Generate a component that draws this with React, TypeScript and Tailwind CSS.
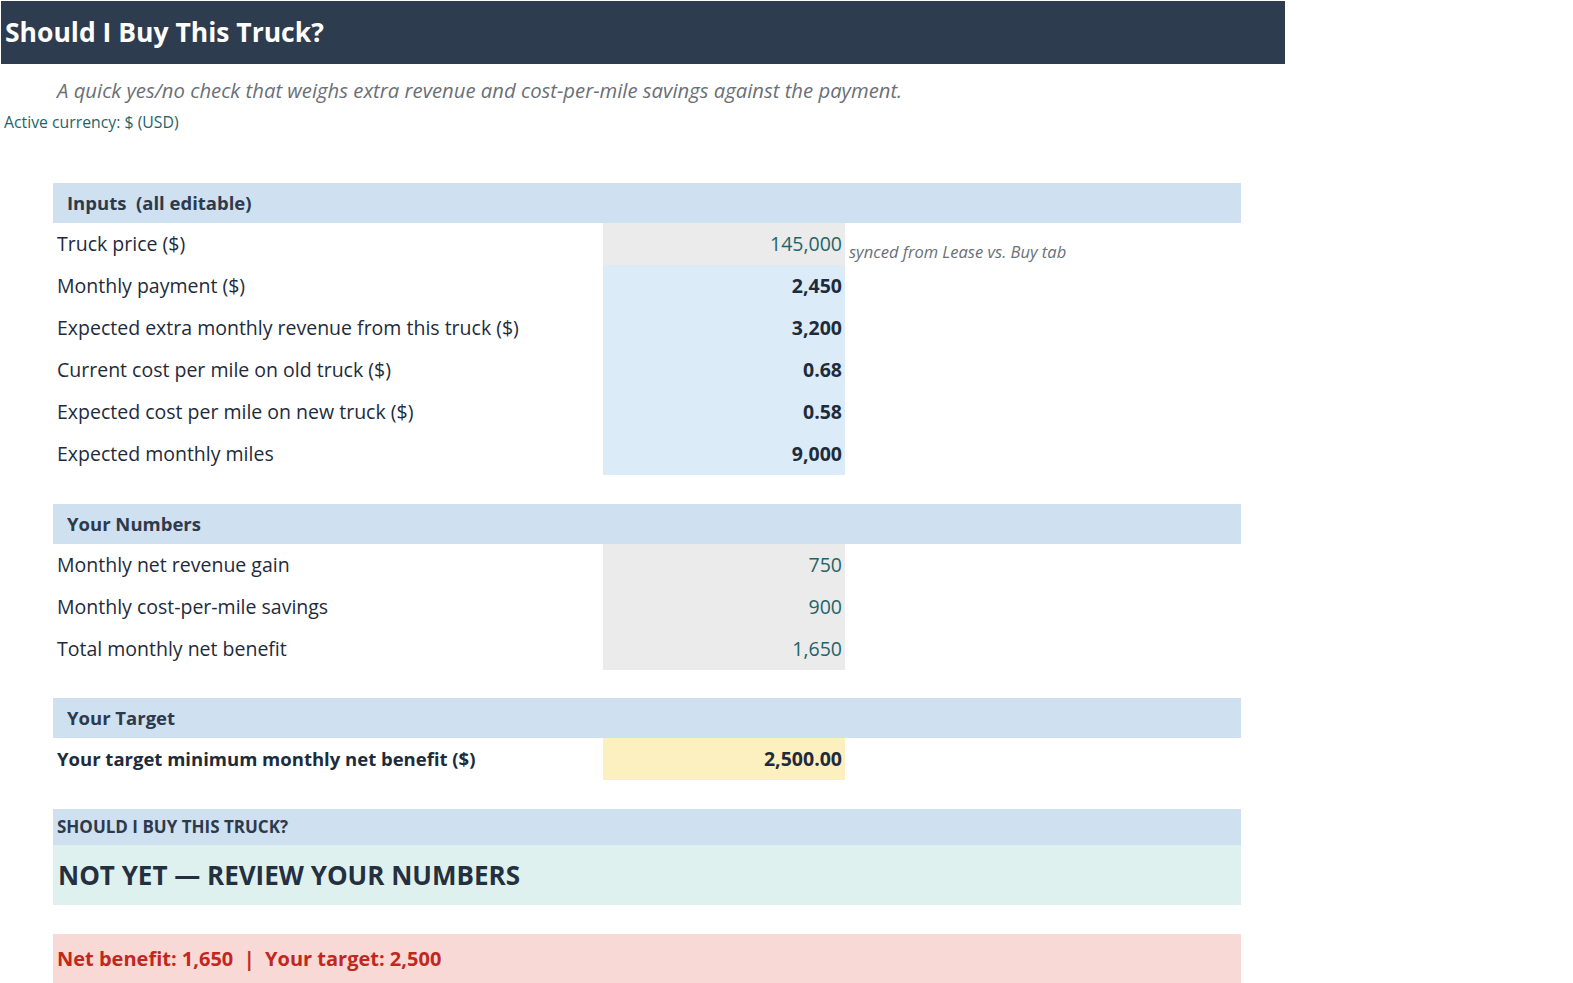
import React from "react";

type Row = { label: string; value: string; kind: "calc" | "input" | "target"; note?: string; bold?: boolean };

const inputs: Row[] = [
  { label: "Truck price ($)", value: "145,000", kind: "calc", note: "synced from Lease vs. Buy tab" },
  { label: "Monthly payment ($)", value: "2,450", kind: "input" },
  { label: "Expected extra monthly revenue from this truck ($)", value: "3,200", kind: "input" },
  { label: "Current cost per mile on old truck ($)", value: "0.68", kind: "input" },
  { label: "Expected cost per mile on new truck ($)", value: "0.58", kind: "input" },
  { label: "Expected monthly miles", value: "9,000", kind: "input" },
];

const numbers: Row[] = [
  { label: "Monthly net revenue gain", value: "750", kind: "calc" },
  { label: "Monthly cost-per-mile savings", value: "900", kind: "calc" },
  { label: "Total monthly net benefit", value: "1,650", kind: "calc" },
];

const valueStyles = {
  calc: "bg-[#ebebeb] text-[#1f6468]",
  input: "bg-[#dcebf8] text-[#1e2b3b] font-bold",
  target: "bg-[#fcefc0] text-[#1e2b3b] font-bold",
};

function SectionHeader({ title }: { title: string }) {
  return (
    <div className="h-[40px] bg-[#cfe0f0] pl-[14px] flex items-center whitespace-pre text-[18.5px] font-bold text-[#2d3a4c]">
      {title}
    </div>
  );
}

function DataRow({ row }: { row: Row }) {
  return (
    <div className="flex h-[42px]">
      <div
        className={`w-[550px] pl-[4px] flex items-center text-[#1e2b3b] ${row.bold ? "font-bold text-[18.5px]" : "text-[19.5px]"}`}
      >
        {row.label}
      </div>
      <div className={`w-[242px] pr-[3px] flex items-center justify-end text-[19.5px] ${valueStyles[row.kind]}`}>
        {row.value}
      </div>
      {row.note && (
        <div className="pl-[4px] flex items-end text-[16.5px] italic text-[#6b6f76]">{row.note}</div>
      )}
    </div>
  );
}

export default function App() {
  return (
    <div className="h-screen overflow-hidden bg-white font-['Open_Sans','Noto_Sans',sans-serif]">
      <div className="pt-[1px] pl-[1px]">
        <div className="w-[1284px] h-[63px] bg-[#2e3c4f] pl-[4px] flex items-center text-[26.5px] font-bold text-white">
          Should I Buy This Truck?
        </div>
      </div>
      <p className="mt-[13px] pl-[57px] text-[20.3px] italic text-[#6b6f76] leading-[26px]">
        A quick yes/no check that weighs extra revenue and cost-per-mile savings against the payment.
      </p>
      <p className="mt-[9px] pl-[4px] text-[15.8px] text-[#1f6468] leading-[20px]">Active currency: $ (USD)</p>

      <div className="ml-[53px] w-[1188px] mt-[51px]">
        <SectionHeader title="Inputs  (all editable)" />
        {inputs.map((r) => (
          <DataRow key={r.label} row={r} />
        ))}

        <div className="h-[29px]" />
        <SectionHeader title="Your Numbers" />
        {numbers.map((r) => (
          <DataRow key={r.label} row={r} />
        ))}

        <div className="h-[28px]" />
        <SectionHeader title="Your Target" />
        <DataRow
          row={{ label: "Your target minimum monthly net benefit ($)", value: "2,500.00", kind: "target", bold: true }}
        />

        <div className="h-[29px]" />
        <div className="h-[36px] bg-[#cfe0f0] pl-[4px] flex items-center text-[17px] font-bold text-[#2d3a4c]">
          SHOULD I BUY THIS TRUCK?
        </div>
        <div className="h-[60px] bg-[#dff1ee] pl-[5px] flex items-center text-[26px] font-bold text-[#24303f]">
          NOT YET — REVIEW YOUR NUMBERS
        </div>

        <div className="h-[29px]" />
        <div className="h-[60px] bg-[#f9d9d6] pl-[4px] pt-[11px] text-[20px] leading-[28px] font-bold text-[#c0281e] whitespace-pre">
          Net benefit: 1,650  |  Your target: 2,500
        </div>
      </div>
    </div>
  );
}
